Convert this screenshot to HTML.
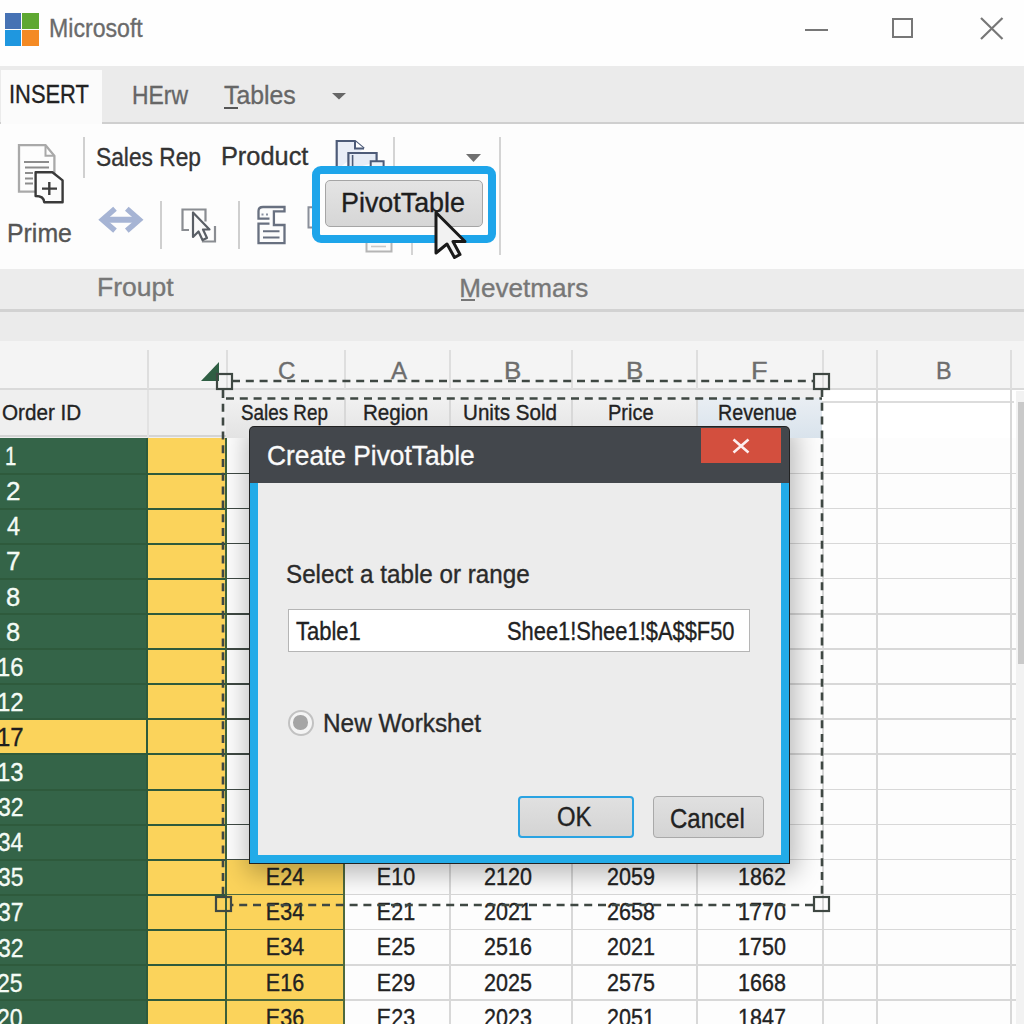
<!DOCTYPE html><html><head><meta charset="utf-8"><style>
*{margin:0;padding:0;box-sizing:border-box}
html,body{width:1024px;height:1024px;overflow:hidden;background:#fff;font-family:"Liberation Sans",sans-serif}
.a{position:absolute}
.t{position:absolute;white-space:nowrap;line-height:1;transform-origin:0 0;-webkit-text-stroke:0.35px currentColor}
</style></head><body>
<div class="a" style="left:0;top:0;width:1024px;height:66px;background:#fefefe"></div>
<div class="a" style="left:5px;top:13px;width:16px;height:16px;background:#4672b4"></div>
<div class="a" style="left:22px;top:13px;width:17px;height:16px;background:#5ea832"></div>
<div class="a" style="left:5px;top:30px;width:16px;height:16px;background:#1f97df"></div>
<div class="a" style="left:22px;top:30px;width:17px;height:16px;background:#f48a24"></div>
<div class="t" style="left:49.3px;top:15.6px;font-size:24.9px;color:#6b6b6b;transform:scaleX(0.929);">Microsoft</div>
<div class="a" style="left:805px;top:29px;width:23px;height:2px;background:#777"></div>
<div class="a" style="left:892px;top:18px;width:21px;height:20px;border:2px solid #777"></div>
<svg class="a" style="left:979px;top:16px" width="26" height="26"><path d="M2 2L23.5 23M23.5 2L2 23" stroke="#777" stroke-width="2.2"/></svg>
<div class="a" style="left:0;top:66px;width:1024px;height:57px;background:#ebebeb"></div>
<div class="a" style="left:0;top:122px;width:1024px;height:2px;background:#cfcfcf"></div>
<div class="a" style="left:1px;top:70px;width:101px;height:54px;background:#fbfbfb"></div>
<div class="t" style="left:8.5px;top:80.5px;font-size:26.7px;color:#222;transform:scaleX(0.820);">INSERT</div>
<div class="t" style="left:132.0px;top:81.7px;font-size:26.7px;color:#666;transform:scaleX(0.858);">HErw</div>
<div class="t" style="left:223.7px;top:81.9px;font-size:26.5px;color:#666;transform:scaleX(0.937);">Tables</div>
<div class="a" style="left:224px;top:106.5px;width:14px;height:2px;background:#555"></div>
<svg class="a" style="left:332px;top:93px" width="14" height="7"><path d="M0 0H14L7 6.5Z" fill="#666"/></svg>
<div class="a" style="left:0;top:124px;width:1024px;height:145px;background:#fdfdfd"></div>
<svg class="a" style="left:10px;top:136px" width="60" height="70" viewBox="10 136 60 70">
<path d="M19 145.2H45.5L54.4 155.8V191.7H19Z" fill="#fdfdfd" stroke="#a9a9a9" stroke-width="2.3"/>
<path d="M45.5 145.2V155.8H54.4" fill="none" stroke="#a9a9a9" stroke-width="2"/>
<path d="M24 162H49M25 167.5H49M25 173H33M25 178.5H33M25 183.5H33" stroke="#8d8d8d" stroke-width="1.8"/>
<path d="M35.6 172.2H52.4L62.6 180.4V202.3H44.2Q44 196 35.6 196Z" fill="#fcfcfc" stroke="#3a3a3a" stroke-width="2.4" stroke-linejoin="round"/>
<path d="M42 188.6H57M49.3 182V195" stroke="#3d3d3d" stroke-width="2.4"/>
</svg>
<div class="t" style="left:6.8px;top:220.5px;font-size:25.5px;color:#555;transform:scaleX(0.975);">Prime</div>
<div class="a" style="left:83px;top:137px;width:2px;height:41px;background:#d0d0d0"></div>
<div class="t" style="left:95.6px;top:144.6px;font-size:25.5px;color:#333;transform:scaleX(0.892);">Sales Rep</div>
<div class="t" style="left:220.9px;top:144.4px;font-size:25.4px;color:#333;">Product</div>
<div class="a" style="left:160px;top:201px;width:2px;height:48px;background:#cfcfcf"></div>
<div class="a" style="left:238px;top:201px;width:2px;height:48px;background:#cfcfcf"></div>
<div class="a" style="left:393px;top:137px;width:2px;height:38px;background:#d4d4d4"></div>
<div class="a" style="left:499px;top:137px;width:2px;height:118px;background:#d4d4d4"></div>
<div class="a" style="left:411px;top:238px;width:2px;height:17px;background:#d4d4d4"></div>
<svg class="a" style="left:0;top:124px" width="520" height="145" viewBox="0 124 520 145">
<path d="M115 208.8L102.5 219.7L115 230.6M126.8 208.8L139.3 219.7L126.8 230.6" fill="none" stroke="#a6b4d4" stroke-width="5.5" stroke-linejoin="miter"/>
<path d="M104 219.7H137.8" stroke="#a6b4d4" stroke-width="6"/>
<path d="M189 230H182.5V209.5H205.5V221.5" fill="none" stroke="#8a8d92" stroke-width="2.2"/>
<path d="M215 226V241.5H203V236" fill="none" stroke="#8a8d92" stroke-width="2.2"/>
<path d="M193 212.5V237L198.5 231.5L202.5 240L207 238L203 229.5L209.5 229.5Z" fill="#fafafa" stroke="#5a5f66" stroke-width="2.2" stroke-linejoin="round"/>
<path d="M269.5 218.6H258.5V211Q258.5 207 263 207H284.5V211.4H273.9V225H284.5V243.2H258.5V223.7H269.5" fill="#fcfcfc" stroke="#687080" stroke-width="2.3"/>
<path d="M263 231.2H279.5M263 237.4H279.5" stroke="#687080" stroke-width="2"/>
<path d="M261.5 214.5h2M266 214.5h2" stroke="#8890a0" stroke-width="2"/>
<path d="M312 207.3H308.5V227.5H312" fill="none" stroke="#8a8f9a" stroke-width="2"/>
<path d="M336.7 170V141H355L364 148.5" fill="#e9eef7" stroke="#4d5b78" stroke-width="2.2"/>
<path d="M355 141V148.5H364" fill="#fff" stroke="#4d5b78" stroke-width="2"/>
<path d="M348.4 170V153H376.6V162" fill="#e6ecf6" stroke="#4d5b78" stroke-width="2.2"/>
<path d="M352.6 170V155" stroke="#4d5b78" stroke-width="1.6"/>
<path d="M370.7 170V161.3H383.6V170" fill="#eef2f8" stroke="#4d5b78" stroke-width="2"/>
<path d="M351 176.5Q362 178 370.5 175.5V172" fill="none" stroke="#5a6680" stroke-width="1.6"/>
<path d="M366.5 238V251.5H391.5V238" fill="#fafafa" stroke="#b5b5b5" stroke-width="2"/>
<path d="M371 246.5H386" stroke="#c8c8c8" stroke-width="1.6"/>
</svg>
<svg class="a" style="left:466px;top:154px" width="15" height="9"><path d="M0 0H15L7.5 8Z" fill="#707070"/></svg>
<div class="a" style="left:312px;top:166px;width:184px;height:77px;border:8px solid #1ea5ea;border-radius:9px;background:#fdfdfd"></div>
<div class="a" style="left:325px;top:180px;width:158px;height:47px;border:1.5px solid #a5a5a5;border-radius:5px;background:linear-gradient(#e4e4e4,#d6d6d6)"></div>
<div class="t" style="left:341.3px;top:189.4px;font-size:27.2px;color:#1e1e1e;transform:scaleX(0.988);">PivotTable</div>
<svg class="a" style="left:432px;top:209px" width="38" height="54" viewBox="0 0 38 54"><path d="M4 3.5V44L15 35L22.5 48.5L28 45.5L21 32.5H33Z" fill="#f2f2f2" stroke="#1a1a1a" stroke-width="3" stroke-linejoin="round"/></svg>
<div class="a" style="left:0;top:269px;width:1024px;height:41px;background:#ececec"></div>
<div class="t" style="left:96.5px;top:275.2px;font-size:25.5px;color:#777;transform:scaleX(1.040);">Froupt</div>
<div class="t" style="left:459.3px;top:275.3px;font-size:26.1px;color:#777;">Mevetmars</div>
<div class="a" style="left:461px;top:299px;width:14px;height:1.5px;background:#777"></div>
<div class="a" style="left:0;top:309px;width:1024px;height:3px;background:#d2d2d2"></div>
<div class="a" style="left:0;top:312px;width:1024px;height:29px;background:#ebebeb"></div>
<div class="a" style="left:0;top:341px;width:1024px;height:48px;background:#f4f4f4"></div>
<div class="a" style="left:0;top:388px;width:1024px;height:2px;background:#dadada"></div>
<div class="a" style="left:147px;top:350px;width:1.5px;height:39px;background:#dedede"></div>
<div class="a" style="left:226px;top:350px;width:1.5px;height:39px;background:#dedede"></div>
<div class="a" style="left:344px;top:350px;width:1.5px;height:39px;background:#dedede"></div>
<div class="a" style="left:449px;top:350px;width:1.5px;height:39px;background:#dedede"></div>
<div class="a" style="left:571px;top:350px;width:1.5px;height:39px;background:#dedede"></div>
<div class="a" style="left:696px;top:350px;width:1.5px;height:39px;background:#dedede"></div>
<div class="a" style="left:822px;top:350px;width:1.5px;height:39px;background:#dedede"></div>
<div class="a" style="left:876px;top:350px;width:1.5px;height:39px;background:#dedede"></div>
<div class="a" style="left:1010px;top:350px;width:1.5px;height:39px;background:#dedede"></div>
<div class="t" style="left:278.1px;top:359.2px;font-size:23.8px;color:#6d6d6d;transform:scaleX(1.015);">C</div>
<div class="t" style="left:391.0px;top:359.2px;font-size:23.8px;color:#6d6d6d;transform:scaleX(1.020);">A</div>
<div class="t" style="left:503.9px;top:359.2px;font-size:23.8px;color:#6d6d6d;transform:scaleX(1.091);">B</div>
<div class="t" style="left:625.9px;top:359.2px;font-size:23.8px;color:#6d6d6d;transform:scaleX(1.091);">B</div>
<div class="t" style="left:751.2px;top:359.2px;font-size:23.8px;color:#6d6d6d;transform:scaleX(1.142);">F</div>
<div class="t" style="left:936.3px;top:359.2px;font-size:23.8px;color:#6d6d6d;transform:scaleX(0.982);">B</div>
<div class="a" style="left:0;top:390px;width:822px;height:48px;background:#efefef"></div>
<div class="a" style="left:226px;top:398px;width:596px;height:40px;background:linear-gradient(#f1f1f1,#e3e3e3)"></div>
<div class="a" style="left:696px;top:398px;width:126px;height:40px;background:linear-gradient(#e9eef3,#d9e3ec)"></div>
<div class="a" style="left:822px;top:390px;width:202px;height:48px;background:#fff"></div>
<div class="a" style="left:0;top:435px;width:226px;height:2px;background:#d4d4d4"></div>
<div class="a" style="left:822px;top:401px;width:192px;height:1.5px;background:#dcdcdc"></div>
<div class="a" style="left:876px;top:390px;width:1.5px;height:48px;background:#d8d8d8"></div>
<div class="a" style="left:1010px;top:390px;width:1.5px;height:48px;background:#d8d8d8"></div>
<div class="a" style="left:147px;top:390px;width:1.5px;height:48px;background:#e2e2e2"></div>
<div class="t" style="left:1.6px;top:401.7px;font-size:22.5px;color:#222;transform:scaleX(0.918);">Order ID</div>
<div class="t" style="left:241.4px;top:401.7px;font-size:22.5px;color:#222;transform:scaleX(0.837);">Sales Rep</div>
<div class="t" style="left:363.2px;top:401.7px;font-size:22.5px;color:#222;transform:scaleX(0.915);">Region</div>
<div class="t" style="left:463.2px;top:401.7px;font-size:22.5px;color:#222;transform:scaleX(0.916);">Units Sold</div>
<div class="t" style="left:608.4px;top:401.7px;font-size:22.5px;color:#222;transform:scaleX(0.890);">Price</div>
<div class="t" style="left:718.4px;top:401.7px;font-size:22.5px;color:#222;transform:scaleX(0.875);">Revenue</div>
<div class="a" style="left:344px;top:398px;width:1.5px;height:40px;background:#d8d8d8"></div>
<div class="a" style="left:449px;top:398px;width:1.5px;height:40px;background:#d8d8d8"></div>
<div class="a" style="left:571px;top:398px;width:1.5px;height:40px;background:#d8d8d8"></div>
<div class="a" style="left:696px;top:398px;width:1.5px;height:40px;background:#d8d8d8"></div>
<div class="a" style="left:226px;top:438px;width:798px;height:586px;background:#fdfdfd"></div>
<div class="a" style="left:0;top:438px;width:147px;height:586px;background:#346448"></div>
<div class="a" style="left:147px;top:438px;width:79px;height:586px;background:#fbd35b"></div>
<div class="a" style="left:226px;top:859.7px;width:118px;height:600px;background:#fbd35b"></div>
<div class="a" style="left:0;top:719.3px;width:147px;height:35.1px;background:#fbd35b"></div>
<div class="t" style="left:5.4px;top:444.1px;font-size:24.9px;color:#f4fbf5;transform:scaleX(0.821);">1</div>
<div class="a" style="left:0;top:472.6px;width:226px;height:2px;background:#2e5a3c"></div>
<div class="a" style="left:226px;top:472.6px;width:118px;height:1.5px;background:#3f4a44"></div>
<div class="a" style="left:344px;top:472.6px;width:672px;height:1.5px;background:#d8d8d8"></div>
<div class="t" style="left:5.7px;top:479.2px;font-size:24.9px;color:#f4fbf5;transform:scaleX(1.047);">2</div>
<div class="a" style="left:0;top:507.7px;width:226px;height:2px;background:#2e5a3c"></div>
<div class="a" style="left:226px;top:507.7px;width:118px;height:1.5px;background:#3f4a44"></div>
<div class="a" style="left:344px;top:507.7px;width:672px;height:1.5px;background:#d8d8d8"></div>
<div class="t" style="left:6.5px;top:514.3px;font-size:24.9px;color:#f4fbf5;transform:scaleX(0.944);">4</div>
<div class="a" style="left:0;top:542.8px;width:226px;height:2px;background:#2e5a3c"></div>
<div class="a" style="left:226px;top:542.8px;width:118px;height:1.5px;background:#3f4a44"></div>
<div class="a" style="left:344px;top:542.8px;width:672px;height:1.5px;background:#d8d8d8"></div>
<div class="t" style="left:5.7px;top:549.4px;font-size:24.9px;color:#f4fbf5;transform:scaleX(1.047);">7</div>
<div class="a" style="left:0;top:577.9px;width:226px;height:2px;background:#2e5a3c"></div>
<div class="a" style="left:226px;top:577.9px;width:118px;height:1.5px;background:#3f4a44"></div>
<div class="a" style="left:344px;top:577.9px;width:672px;height:1.5px;background:#d8d8d8"></div>
<div class="t" style="left:6.0px;top:584.5px;font-size:24.9px;color:#f4fbf5;transform:scaleX(1.024);">8</div>
<div class="a" style="left:0;top:613.0px;width:226px;height:2px;background:#2e5a3c"></div>
<div class="a" style="left:226px;top:613.0px;width:118px;height:1.5px;background:#3f4a44"></div>
<div class="a" style="left:344px;top:613.0px;width:672px;height:1.5px;background:#d8d8d8"></div>
<div class="t" style="left:6.0px;top:619.6px;font-size:24.9px;color:#f4fbf5;transform:scaleX(1.024);">8</div>
<div class="a" style="left:0;top:648.1px;width:226px;height:2px;background:#2e5a3c"></div>
<div class="a" style="left:226px;top:648.1px;width:118px;height:1.5px;background:#3f4a44"></div>
<div class="a" style="left:344px;top:648.1px;width:672px;height:1.5px;background:#d8d8d8"></div>
<div class="t" style="left:-3.4px;top:654.7px;font-size:24.9px;color:#f4fbf5;transform:scaleX(0.952);">16</div>
<div class="a" style="left:0;top:683.2px;width:226px;height:2px;background:#2e5a3c"></div>
<div class="a" style="left:226px;top:683.2px;width:118px;height:1.5px;background:#3f4a44"></div>
<div class="a" style="left:344px;top:683.2px;width:672px;height:1.5px;background:#d8d8d8"></div>
<div class="t" style="left:-3.4px;top:689.8px;font-size:24.9px;color:#f4fbf5;transform:scaleX(0.962);">12</div>
<div class="a" style="left:0;top:718.3px;width:226px;height:2px;background:#2e5a3c"></div>
<div class="a" style="left:226px;top:718.3px;width:118px;height:1.5px;background:#3f4a44"></div>
<div class="a" style="left:344px;top:718.3px;width:672px;height:1.5px;background:#d8d8d8"></div>
<div class="t" style="left:-3.4px;top:724.9px;font-size:24.9px;color:#1e1e1e;transform:scaleX(0.962);">17</div>
<div class="a" style="left:0;top:753.4px;width:226px;height:2px;background:#2e5a3c"></div>
<div class="a" style="left:226px;top:753.4px;width:118px;height:1.5px;background:#3f4a44"></div>
<div class="a" style="left:344px;top:753.4px;width:672px;height:1.5px;background:#d8d8d8"></div>
<div class="t" style="left:-3.4px;top:760.0px;font-size:24.9px;color:#f4fbf5;transform:scaleX(0.952);">13</div>
<div class="a" style="left:0;top:788.5px;width:226px;height:2px;background:#2e5a3c"></div>
<div class="a" style="left:226px;top:788.5px;width:118px;height:1.5px;background:#3f4a44"></div>
<div class="a" style="left:344px;top:788.5px;width:672px;height:1.5px;background:#d8d8d8"></div>
<div class="t" style="left:-2.4px;top:795.1px;font-size:24.9px;color:#f4fbf5;transform:scaleX(0.924);">32</div>
<div class="a" style="left:0;top:823.6px;width:226px;height:2px;background:#2e5a3c"></div>
<div class="a" style="left:226px;top:823.6px;width:118px;height:1.5px;background:#3f4a44"></div>
<div class="a" style="left:344px;top:823.6px;width:672px;height:1.5px;background:#d8d8d8"></div>
<div class="t" style="left:-2.4px;top:830.2px;font-size:24.9px;color:#f4fbf5;transform:scaleX(0.906);">34</div>
<div class="a" style="left:0;top:858.7px;width:226px;height:2px;background:#2e5a3c"></div>
<div class="a" style="left:226px;top:858.7px;width:118px;height:1.5px;background:#3f4a44"></div>
<div class="a" style="left:344px;top:858.7px;width:672px;height:1.5px;background:#d8d8d8"></div>
<div class="t" style="left:-2.4px;top:865.3px;font-size:24.9px;color:#f4fbf5;transform:scaleX(0.915);">35</div>
<div class="a" style="left:0;top:893.8px;width:226px;height:2px;background:#2e5a3c"></div>
<div class="a" style="left:226px;top:893.8px;width:118px;height:1.5px;background:#4f6a3e"></div>
<div class="a" style="left:344px;top:893.8px;width:672px;height:1.5px;background:#d8d8d8"></div>
<div class="t" style="left:-2.4px;top:900.4px;font-size:24.9px;color:#f4fbf5;transform:scaleX(0.924);">37</div>
<div class="a" style="left:0;top:928.9px;width:226px;height:2px;background:#2e5a3c"></div>
<div class="a" style="left:226px;top:928.9px;width:118px;height:1.5px;background:#4f6a3e"></div>
<div class="a" style="left:344px;top:928.9px;width:672px;height:1.5px;background:#d8d8d8"></div>
<div class="t" style="left:-2.4px;top:935.5px;font-size:24.9px;color:#f4fbf5;transform:scaleX(0.924);">32</div>
<div class="a" style="left:0;top:964.0px;width:226px;height:2px;background:#2e5a3c"></div>
<div class="a" style="left:226px;top:964.0px;width:118px;height:1.5px;background:#4f6a3e"></div>
<div class="a" style="left:344px;top:964.0px;width:672px;height:1.5px;background:#d8d8d8"></div>
<div class="t" style="left:-2.7px;top:970.6px;font-size:24.9px;color:#f4fbf5;transform:scaleX(0.924);">25</div>
<div class="a" style="left:0;top:999.1px;width:226px;height:2px;background:#2e5a3c"></div>
<div class="a" style="left:226px;top:999.1px;width:118px;height:1.5px;background:#4f6a3e"></div>
<div class="a" style="left:344px;top:999.1px;width:672px;height:1.5px;background:#d8d8d8"></div>
<div class="t" style="left:-2.7px;top:1005.7px;font-size:24.9px;color:#f4fbf5;transform:scaleX(0.924);">20</div>
<div class="a" style="left:146px;top:438px;width:2px;height:586px;background:#2e5a3c"></div>
<div class="a" style="left:225px;top:438px;width:2px;height:586px;background:#3b5e3a"></div>
<div class="a" style="left:343px;top:859.7px;width:2px;height:200px;background:#4f6a3e"></div>
<div class="a" style="left:449px;top:438px;width:1.5px;height:586px;background:#d8d8d8"></div>
<div class="a" style="left:571px;top:438px;width:1.5px;height:586px;background:#d8d8d8"></div>
<div class="a" style="left:696px;top:438px;width:1.5px;height:586px;background:#d8d8d8"></div>
<div class="a" style="left:876px;top:438px;width:1.5px;height:586px;background:#d8d8d8"></div>
<div class="a" style="left:1010px;top:438px;width:1.5px;height:586px;background:#d8d8d8"></div>
<div class="a" style="left:822px;top:438px;width:1.5px;height:586px;background:#d8d8d8"></div>
<div class="t" style="left:235.4px;width:100px;text-align:center;top:865.2px;font-size:23.9px;color:#222;transform:scaleX(0.9);transform-origin:50% 0">E24</div>
<div class="t" style="left:346.0px;width:100px;text-align:center;top:865.2px;font-size:23.9px;color:#222;transform:scaleX(0.9);transform-origin:50% 0">E10</div>
<div class="t" style="left:458.3px;width:100px;text-align:center;top:865.2px;font-size:23.9px;color:#222;transform:scaleX(0.9);transform-origin:50% 0">2120</div>
<div class="t" style="left:580.6px;width:100px;text-align:center;top:865.2px;font-size:23.9px;color:#222;transform:scaleX(0.9);transform-origin:50% 0">2059</div>
<div class="t" style="left:711.9px;width:100px;text-align:center;top:865.2px;font-size:23.9px;color:#222;transform:scaleX(0.9);transform-origin:50% 0">1862</div>
<div class="t" style="left:235.4px;width:100px;text-align:center;top:900.3px;font-size:23.9px;color:#222;transform:scaleX(0.9);transform-origin:50% 0">E34</div>
<div class="t" style="left:346.0px;width:100px;text-align:center;top:900.3px;font-size:23.9px;color:#222;transform:scaleX(0.9);transform-origin:50% 0">E21</div>
<div class="t" style="left:458.3px;width:100px;text-align:center;top:900.3px;font-size:23.9px;color:#222;transform:scaleX(0.9);transform-origin:50% 0">2021</div>
<div class="t" style="left:580.6px;width:100px;text-align:center;top:900.3px;font-size:23.9px;color:#222;transform:scaleX(0.9);transform-origin:50% 0">2658</div>
<div class="t" style="left:711.9px;width:100px;text-align:center;top:900.3px;font-size:23.9px;color:#222;transform:scaleX(0.9);transform-origin:50% 0">1770</div>
<div class="t" style="left:235.4px;width:100px;text-align:center;top:935.4px;font-size:23.9px;color:#222;transform:scaleX(0.9);transform-origin:50% 0">E34</div>
<div class="t" style="left:346.0px;width:100px;text-align:center;top:935.4px;font-size:23.9px;color:#222;transform:scaleX(0.9);transform-origin:50% 0">E25</div>
<div class="t" style="left:458.3px;width:100px;text-align:center;top:935.4px;font-size:23.9px;color:#222;transform:scaleX(0.9);transform-origin:50% 0">2516</div>
<div class="t" style="left:580.6px;width:100px;text-align:center;top:935.4px;font-size:23.9px;color:#222;transform:scaleX(0.9);transform-origin:50% 0">2021</div>
<div class="t" style="left:711.9px;width:100px;text-align:center;top:935.4px;font-size:23.9px;color:#222;transform:scaleX(0.9);transform-origin:50% 0">1750</div>
<div class="t" style="left:235.4px;width:100px;text-align:center;top:970.5px;font-size:23.9px;color:#222;transform:scaleX(0.9);transform-origin:50% 0">E16</div>
<div class="t" style="left:346.0px;width:100px;text-align:center;top:970.5px;font-size:23.9px;color:#222;transform:scaleX(0.9);transform-origin:50% 0">E29</div>
<div class="t" style="left:458.3px;width:100px;text-align:center;top:970.5px;font-size:23.9px;color:#222;transform:scaleX(0.9);transform-origin:50% 0">2025</div>
<div class="t" style="left:580.6px;width:100px;text-align:center;top:970.5px;font-size:23.9px;color:#222;transform:scaleX(0.9);transform-origin:50% 0">2575</div>
<div class="t" style="left:711.9px;width:100px;text-align:center;top:970.5px;font-size:23.9px;color:#222;transform:scaleX(0.9);transform-origin:50% 0">1668</div>
<div class="t" style="left:235.4px;width:100px;text-align:center;top:1005.6px;font-size:23.9px;color:#222;transform:scaleX(0.9);transform-origin:50% 0">E36</div>
<div class="t" style="left:346.0px;width:100px;text-align:center;top:1005.6px;font-size:23.9px;color:#222;transform:scaleX(0.9);transform-origin:50% 0">E23</div>
<div class="t" style="left:458.3px;width:100px;text-align:center;top:1005.6px;font-size:23.9px;color:#222;transform:scaleX(0.9);transform-origin:50% 0">2023</div>
<div class="t" style="left:580.6px;width:100px;text-align:center;top:1005.6px;font-size:23.9px;color:#222;transform:scaleX(0.9);transform-origin:50% 0">2051</div>
<div class="t" style="left:711.9px;width:100px;text-align:center;top:1005.6px;font-size:23.9px;color:#222;transform:scaleX(0.9);transform-origin:50% 0">1847</div>
<div class="a" style="left:227px;top:438px;width:595px;height:457px;overflow:hidden"><div class="a" style="left:22px;top:-12px;width:541px;height:438px;box-shadow:2px 6px 24px 4px rgba(0,0,0,.27);background:#ccc"></div></div>
<div class="a" style="left:1016px;top:391px;width:8px;height:633px;background:#f2f2f2"></div>
<div class="a" style="left:1018px;top:402px;width:6px;height:262px;background:#c9c9c9"></div>
<svg class="a" style="left:0;top:0" width="1024" height="1024"><path d="M232 381H813M822 389V897M813 905H232M223 390V896" stroke="#3f4843" stroke-width="2.6" stroke-dasharray="8 5.8" fill="none"/><path d="M226 398.5H822" stroke="#3f4843" stroke-width="2.6" stroke-dasharray="8 5.8" fill="none"/><path d="M201 381L219 362V381Z" fill="#2f5e43"/><rect x="217" y="374" width="15" height="15" fill="none" stroke="#3f4843" stroke-width="2.2"/><rect x="814" y="374" width="15" height="15" fill="none" stroke="#3f4843" stroke-width="2.2"/><rect x="216" y="897" width="15" height="14" fill="none" stroke="#3f4843" stroke-width="2.2"/><rect x="814" y="897" width="15" height="14" fill="none" stroke="#3f4843" stroke-width="2.2"/></svg>
<div class="a" style="left:249px;top:426px;width:541px;height:438px;border-radius:5px 5px 0 0;background:#222"></div>
<div class="a" style="left:250px;top:427px;width:539px;height:56px;background:#43474c;border-radius:4px 4px 0 0"></div>
<div class="a" style="left:701px;top:428px;width:80px;height:35px;background:#d34f3e"></div>
<svg class="a" style="left:731px;top:438px" width="20" height="16"><path d="M2.5 1.5L17.5 14.5M17.5 1.5L2.5 14.5" stroke="#fdeeee" stroke-width="2.6"/></svg>
<div class="t" style="left:266.9px;top:441.0px;font-size:28.3px;color:#fafafa;transform:scaleX(0.930);">Create PivotTable</div>
<div class="a" style="left:250px;top:483px;width:539px;height:380px;background:#22abe8"></div>
<div class="a" style="left:258px;top:483px;width:523px;height:372px;background:#ececec"></div>
<div class="t" style="left:285.9px;top:561.7px;font-size:24.9px;color:#2a2a2a;transform:scaleX(0.973);">Select a table or range</div>
<div class="a" style="left:288px;top:609px;width:462px;height:43px;background:#fff;border:1.5px solid #b5b5b5"></div>
<div class="t" style="left:296.0px;top:618.5px;font-size:25.1px;color:#222;transform:scaleX(0.877);">Table1</div>
<div class="t" style="left:507.2px;top:618.5px;font-size:25.1px;color:#222;transform:scaleX(0.872);">Shee1!Shee1!$A$$F50</div>
<div class="a" style="left:287.5px;top:709.5px;width:26px;height:26px;border-radius:50%;background:#f4f4f4;border:2px solid #c2c2c2"></div>
<div class="a" style="left:293.3px;top:715.3px;width:14.5px;height:14.5px;border-radius:50%;background:#a5a5a5"></div>
<div class="t" style="left:322.7px;top:711.0px;font-size:24.9px;color:#2a2a2a;transform:scaleX(0.979);">New Workshet</div>
<div class="a" style="left:517.5px;top:795.5px;width:116px;height:42px;border:2.5px solid #2aa3e2;border-radius:4px;background:linear-gradient(#e0e0e0,#d4d4d4)"></div>
<div class="t" style="left:556.5px;top:804.4px;font-size:26.8px;color:#222;transform:scaleX(0.892);">OK</div>
<div class="a" style="left:652.5px;top:796px;width:111px;height:42px;border:1.5px solid #a9a9a9;border-radius:4px;background:linear-gradient(#e0e0e0,#d4d4d4)"></div>
<div class="t" style="left:670.4px;top:805.0px;font-size:27.1px;color:#222;transform:scaleX(0.886);">Cancel</div>
</body></html>
